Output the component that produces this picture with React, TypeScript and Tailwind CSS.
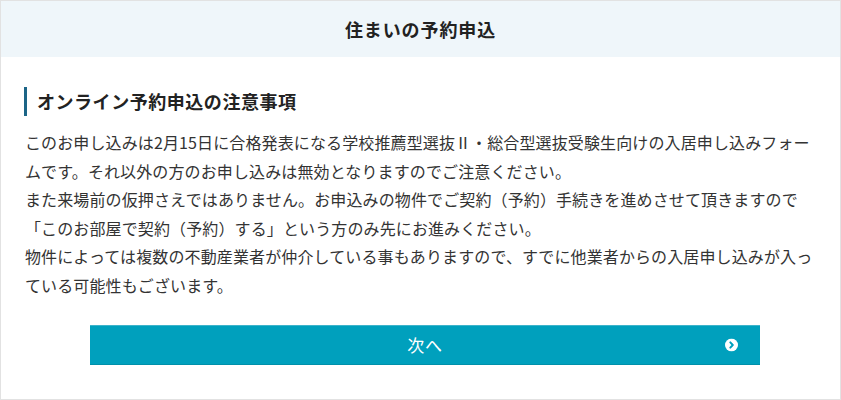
import React from "react";

export default function App() {
  const font = { fontFamily: '"Noto Sans CJK JP", "Noto Sans", sans-serif' };
  return (
    <div
      style={font}
      className="w-[841px] h-[400px] border border-[#e2e2e2] bg-white box-border overflow-hidden"
    >
      <div className="h-[56px] bg-[#eff6fa] flex items-center justify-center text-[18px] font-bold text-[#222] tracking-[0.05em]">
        住まいの予約申込
      </div>
      <div className="pl-[23px] pr-[24px] pt-[30px]">
        <h2 className="border-l-[3px] border-[#1c6587] pl-[10px] h-[29px] flex items-center text-[18px] font-bold text-[#222] tracking-[0.03em]">
          オンライン予約申込の注意事項
        </h2>
        <p className="mt-[12px] pl-[1px] text-[16px] leading-[28.6px] tracking-[0.12px] text-[#333] whitespace-nowrap">
          このお申し込みは2月15日に合格発表になる学校推薦型選抜Ⅱ・総合型選抜受験生向けの入居申し込みフォー
          <br />
          ムです。それ以外の方のお申し込みは無効となりますのでご注意ください。
          <br />
          また来場前の仮押さえではありません。お申込みの物件でご契約（予約）手続きを進めさせて頂きますので
          <br />
          「このお部屋で契約（予約）する」という方のみ先にお進みください。
          <br />
          物件によっては複数の不動産業者が仲介している事もありますので、すでに他業者からの入居申し込みが入っ
          <br />
          ている可能性もございます。
        </p>
        <button
          type="button"
          className="mt-[25px] ml-[66px] w-[670px] h-[40px] bg-[#00a0bd] border-t border-t-[#3db3ca] border-b border-b-[#0090aa] relative flex items-center justify-center text-white text-[17px] tracking-[0.05em]"
        >
          次へ
          <svg
            className="absolute right-[22px] top-1/2 -translate-y-1/2"
            width="13"
            height="13"
            viewBox="0 0 13 13"
          >
            <circle cx="6.5" cy="6.5" r="6.5" fill="#ffffff" />
            <path
              d="M5.3 3.9 L7.8 6.5 L5.3 9.1"
              fill="none"
              stroke="#00a0bd"
              strokeWidth="2"
              strokeLinecap="round"
              strokeLinejoin="round"
            />
          </svg>
        </button>
      </div>
    </div>
  );
}
